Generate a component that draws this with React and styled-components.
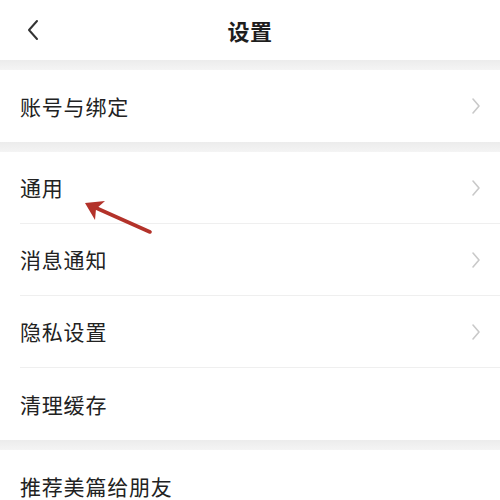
import React from 'react'
import styled, { createGlobalStyle } from 'styled-components'

const Global = createGlobalStyle`
  html, body {
    margin: 0;
    padding: 0;
    background: #fff;
  }
  body {
    font-family: "Noto Sans CJK SC", "Noto Sans", sans-serif;
    color: #222;
  }
`

const Page = styled.div`
  width: 500px;
  height: 500px;
  overflow: hidden;
  background: #fff;
  display: flex;
  flex-direction: column;
`

const Header = styled.header`
  height: 60px;
  flex: none;
  display: grid;
  grid-template-columns: 60px 1fr 60px;
  align-items: center;
`

const Back = styled.div`
  display: flex;
  align-items: center;
  justify-content: flex-start;
  padding-left: 26px;
  height: 100%;
`

const Title = styled.h1`
  margin: 0;
  text-align: center;
  font-size: 22px;
  font-weight: 700;
  color: #1e1e1e;
  letter-spacing: 0.5px;
  line-height: 1;
`

const Band = styled.div`
  height: 10px;
  flex: none;
  background: linear-gradient(#ececec, #f4f4f4);
`

const Group = styled.section`
  display: flex;
  flex-direction: column;
  background: #fff;
`

const Row = styled.div`
  position: relative;
  height: 72px;
  flex: none;
  display: flex;
  align-items: center;
  justify-content: space-between;
  margin-left: 20px;
  padding-right: 18px;
  border-bottom: ${(p) => (p.$last ? 'none' : '1px solid #efefef')};
  box-sizing: border-box;
`

const Label = styled.span`
  font-size: 21px;
  line-height: 1;
  color: #222;
  letter-spacing: 0.8px;
`

const Chevron = () => (
  <svg width="12" height="18" viewBox="0 0 12 18" fill="none">
    <path d="M3 2l6 7-6 7" stroke="#c9c9c9" strokeWidth="1.6" strokeLinecap="round" strokeLinejoin="round" />
  </svg>
)

const Arrow = styled.svg`
  position: absolute;
  left: 42px;
  top: 40px;
  pointer-events: none;
`

const items = [
  [{ label: '账号与绑定', chevron: true }],
  [
    { label: '通用', chevron: true, arrow: true },
    { label: '消息通知', chevron: true },
    { label: '隐私设置', chevron: true },
    { label: '清理缓存', chevron: false },
  ],
  [{ label: '推荐美篇给朋友', chevron: false }],
]

export default function App() {
  return (
    <Page>
      <Global />
      <Header>
        <Back>
          <svg width="14" height="22" viewBox="0 0 14 22" fill="none">
            <path d="M11 2L3 11l8 9" stroke="#333" strokeWidth="2" strokeLinecap="round" strokeLinejoin="round" />
          </svg>
        </Back>
        <Title>设置</Title>
        <div />
      </Header>
      {items.map((group, gi) => (
        <React.Fragment key={gi}>
          <Band />
          <Group>
            {group.map((it, i) => (
              <Row key={it.label} $last={i === group.length - 1}>
                <Label>{it.label}</Label>
                {it.chevron && <Chevron />}
                {it.arrow && (
                  <Arrow width="96" height="46" viewBox="0 0 96 46">
                    <path d="M88 40L32 15" stroke="#b3322a" strokeWidth="3.6" strokeLinecap="round" />
                    <path d="M23 11L43 9 34 17 33 28Z" fill="#b3322a" />
                  </Arrow>
                )}
              </Row>
            ))}
          </Group>
        </React.Fragment>
      ))}
    </Page>
  )
}
